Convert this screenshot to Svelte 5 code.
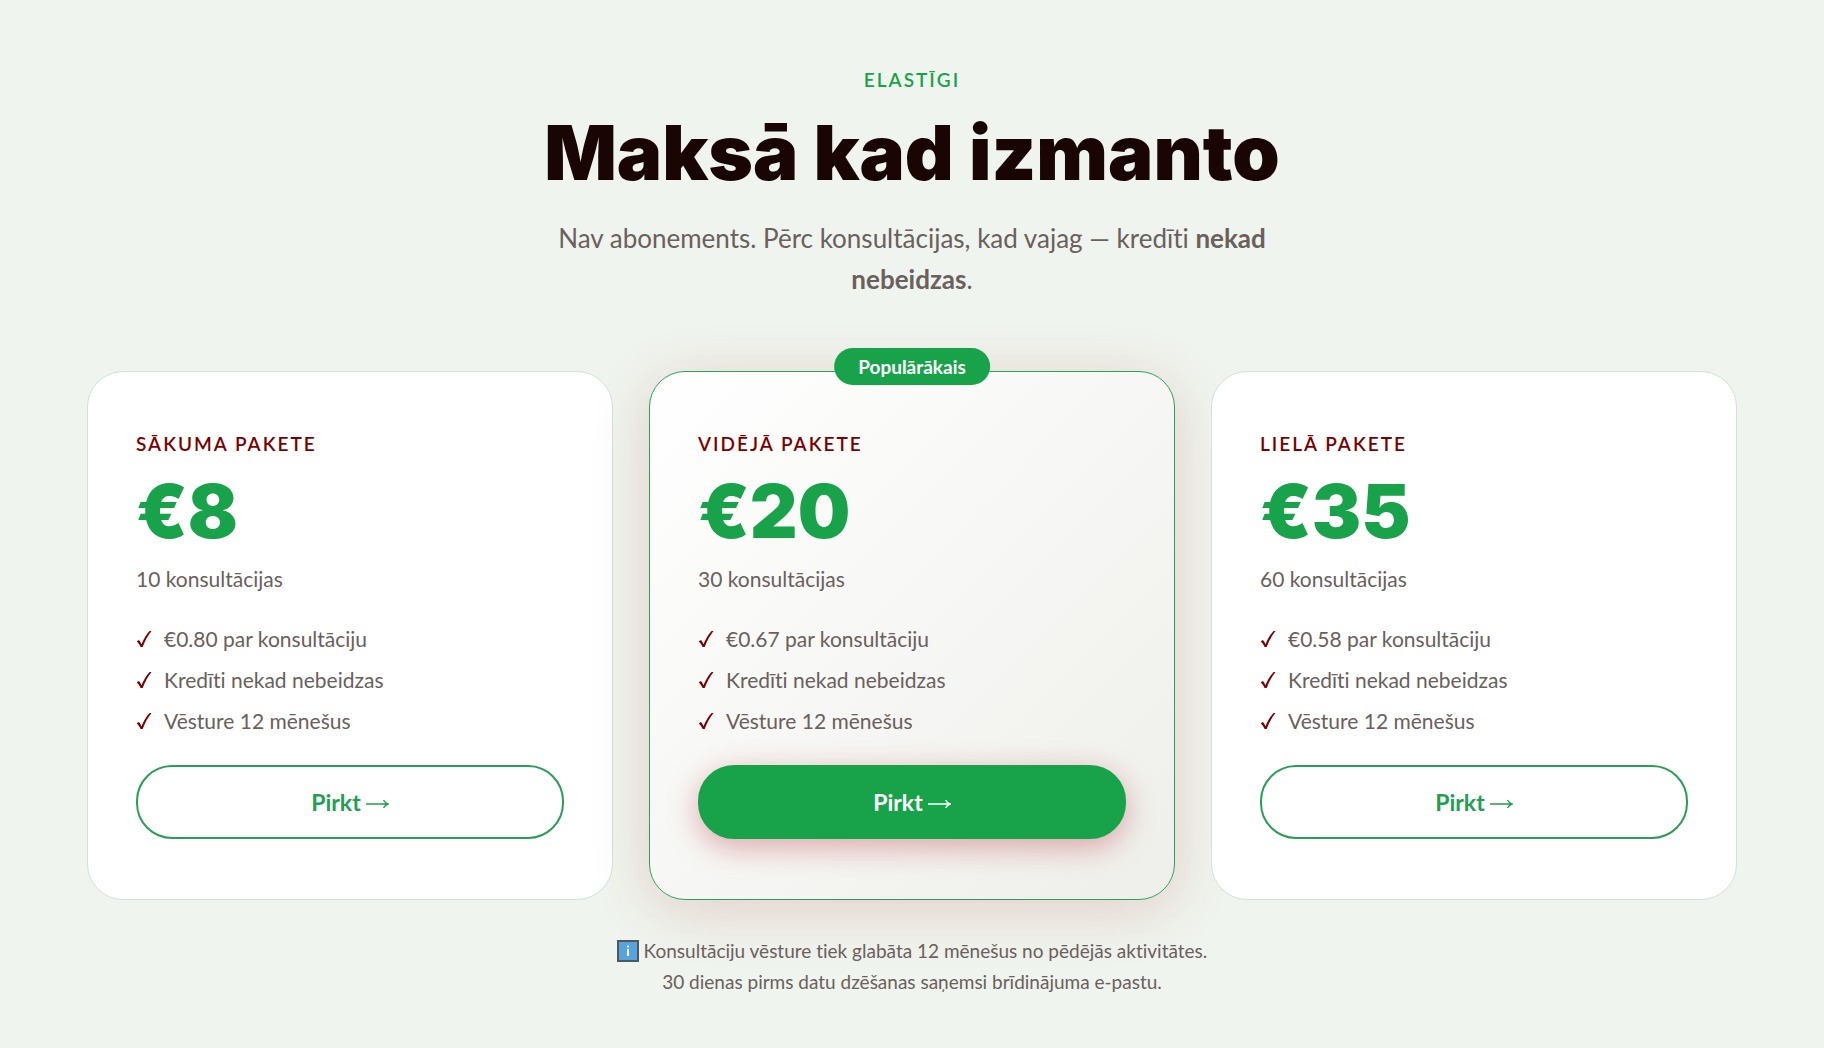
<script>
  const perks = ['Kredīti nekad nebeidzas', 'Vēsture 12 mēnešus'];
  const plans = [
    { name: 'Sākuma pakete', price: '€8', amount: '10 konsultācijas', rate: '€0.80 par konsultāciju' },
    { name: 'Vidējā pakete', price: '€20', amount: '30 konsultācijas', rate: '€0.67 par konsultāciju', featured: true },
    { name: 'Lielā pakete', price: '€35', amount: '60 konsultācijas', rate: '€0.58 par konsultāciju' }
  ];
</script>

<main class="pricing">
  <header class="intro">
    <p class="eyebrow">Elastīgi</p>
    <h1>Maksā kad izmanto</h1>
    <p class="lead">
      Nav abonements. Pērc konsultācijas, kad vajag — kredīti <strong>nekad nebeidzas</strong>.
    </p>
  </header>

  <section class="plans" aria-label="Paketes">
    {#each plans as plan}
      <article class="card" class:featured={plan.featured}>
        {#if plan.featured}
          <span class="badge">Populārākais</span>
        {/if}
        <h2>{plan.name}</h2>
        <p class="price">{plan.price}</p>
        <p class="amount">{plan.amount}</p>
        <ul>
          {#each [plan.rate, ...perks] as perk}
            <li>
              <svg class="check" viewBox="0 0 16 18" aria-hidden="true">
                <path d="M.7 11.2 3 10c1 1.200 1.800 2.600 2.500 4.200C7.600 8.900 10.300 4.500 13.600 1h1.900C11.700 5.800 8.800 11 6.700 17H4.600C3.500 14.600 2.200 12.700.7 11.200Z" />
              </svg>
              {perk}
            </li>
          {/each}
        </ul>
        <button type="button">
          Pirkt
          <svg class="arrow" viewBox="0 0 23 10" aria-hidden="true">
            <path d="M0 5h21.500M17.500 1c1 2 2.500 3.300 4.500 4-2 .7-3.500 2-4.500 4" />
          </svg>
        </button>
      </article>
    {/each}
  </section>

  <footer>
    <p>
      <svg class="info" viewBox="0 0 22 22" aria-hidden="true">
        <rect x="1" y="1" width="20" height="20" />
        <path d="M11 9v7M11 5.500v2" />
      </svg>
      Konsultāciju vēsture tiek glabāta 12 mēnešus no pēdējās aktivitātes.
    </p>
    <p>30 dienas pirms datu dzēšanas saņemsi brīdinājuma e-pastu.</p>
  </footer>
</main>

<style>
  :global(body) {
    margin: 0;
    background: #f0f4ee;
  }
  .pricing {
    --green: #18a34a;
    --maroon: #7b0000;
    --muted: #6a605c;
    box-sizing: border-box;
    max-width: 1698px;
    min-height: 100vh;
    margin: 0 auto;
    padding: 66px 24px 50px;
    font-family: Lato, 'Open Sans', sans-serif;
    font-variant-ligatures: none;
    color: var(--muted);
  }
  p, h1, h2, ul {
    margin: 0;
  }
  .intro {
    text-align: center;
  }
  .eyebrow {
    font-size: 19px;
    line-height: 28px;
    font-weight: 600;
    letter-spacing: 2px;
    text-transform: uppercase;
    color: var(--green);
  }
  h1 {
    margin-top: 18px;
    font-family: Inter, sans-serif;
    font-size: 76px;
    line-height: 80px;
    font-weight: 900;
    color: #1a0505;
  }
  .lead {
    max-width: 736px;
    margin: 26px auto 0;
    font-size: 26px;
    line-height: 41px;
  }
  .plans {
    display: grid;
    grid-template-columns: repeat(auto-fit, minmax(320px, 1fr));
    gap: 36px;
    margin-top: 71px;
  }
  .card {
    position: relative;
    display: flex;
    flex-direction: column;
    padding: 60px 48px;
    border: 1px solid #cce5d7;
    border-radius: 36px;
    background: #fff;
  }
  .featured {
    border-color: #2ca15a;
    background: linear-gradient(135deg, #fff, #eeefea);
    box-shadow: 0 10px 60px rgba(150, 10, 10, 0.16);
  }
  .badge {
    position: absolute;
    top: -24px;
    left: 50%;
    transform: translateX(-50%);
    padding: 0 24px;
    border-radius: 20px;
    background: var(--green);
    color: #fff;
    font-size: 19px;
    line-height: 37px;
    font-weight: 700;
    white-space: nowrap;
  }
  h2 {
    font-size: 19px;
    line-height: 24px;
    font-weight: 600;
    letter-spacing: 2px;
    text-transform: uppercase;
    color: var(--maroon);
  }
  .price {
    margin-top: 19px;
    font-family: Inter, sans-serif;
    font-size: 74px;
    line-height: 72px;
    font-weight: 900;
    color: var(--green);
  }
  .amount {
    margin-top: 16px;
    font-size: 21px;
    line-height: 32px;
  }
  ul {
    display: grid;
    gap: 12px;
    margin-top: 29px;
    padding: 0;
    list-style: none;
  }
  li {
    display: flex;
    align-items: center;
    gap: 12px;
    font-size: 21px;
    line-height: 29px;
  }
  .check {
    width: 16px;
    height: 18px;
    fill: var(--maroon);
  }
  button {
    display: flex;
    align-items: center;
    justify-content: center;
    gap: 5px;
    margin-top: 30px;
    padding: 20px;
    border: 2px solid #2a9d57;
    border-radius: 36px;
    background: transparent;
    color: #229f52;
    font: 700 23px/30px Lato, sans-serif;
    cursor: pointer;
  }
  .arrow {
    width: 23px;
    height: 10px;
    margin-top: 4px;
    fill: none;
    stroke: currentColor;
    stroke-width: 1.4;
  }
  .featured button {
    border-color: var(--green);
    background: var(--green);
    color: #fff;
    box-shadow: 0 8px 30px rgba(170, 20, 30, 0.34);
  }
  footer {
    position: relative;
    margin-top: 35px;
    font-size: 19px;
    line-height: 31px;
    text-align: center;
  }
  .info {
    width: 22px;
    height: 22px;
    vertical-align: -4px;
  }
  .info rect {
    fill: #55a4e0;
    stroke: #51585c;
    stroke-width: 2;
  }
  .info path {
    stroke: #fff;
    stroke-width: 2;
  }
</style>
